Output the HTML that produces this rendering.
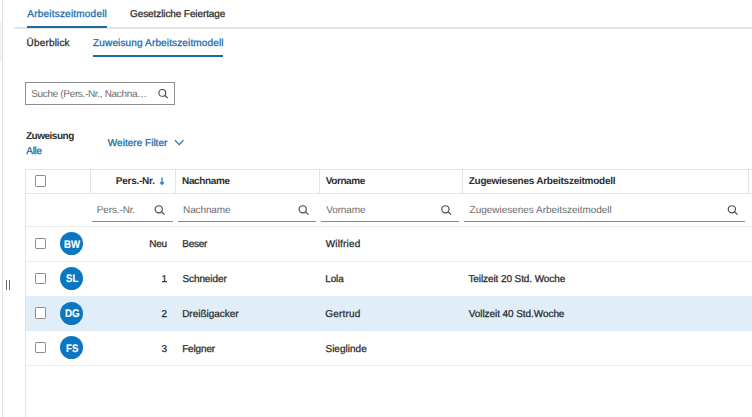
<!DOCTYPE html>
<html lang="de">
<head>
<meta charset="utf-8">
<title>Zuweisung Arbeitszeitmodell</title>
<style>
html,body{margin:0;padding:0;background:#fff;}
body{width:752px;height:417px;overflow:hidden;position:relative;font-family:"Liberation Sans",sans-serif;}
.t{position:absolute;white-space:nowrap;text-rendering:geometricPrecision;font-family:"Liberation Sans",sans-serif;}
.b{position:absolute;}
.cb{position:absolute;width:9.6px;height:9.4px;border:1px solid #8c8c8c;border-radius:1.2px;background:#fff;}
.av{position:absolute;width:23px;height:23px;border-radius:50%;background:#0b77c2;}
.ul{position:absolute;height:1px;background:#8a8a8a;top:220.7px;}
.hl{position:absolute;height:1px;background:#e6e6e6;left:26px;width:726px;}
.vl{position:absolute;width:1px;background:#e2e2e2;top:169px;height:24.5px;}
svg{position:absolute;overflow:visible;}
</style>
</head>
<body>
<!-- left rail -->
<div class="b" style="left:0;top:22px;width:2px;height:39.5px;background:#f0f4f9"></div>
<div class="b" style="left:2px;top:0;width:1px;height:417px;background:#e2e2e2"></div>
<!-- splitter handle -->
<div class="b" style="left:6.2px;top:280px;width:1px;height:10px;background:#666"></div>
<div class="b" style="left:9.3px;top:280px;width:1px;height:10px;background:#666"></div>
<!-- main tab bar line -->
<div class="b" style="left:14px;top:27.2px;width:738px;height:1.5px;background:#e4e4e4"></div>
<div class="b" style="left:27px;top:25.8px;width:79.5px;height:2px;background:#1c6ba3"></div>
<div class="b" style="left:93px;top:55px;width:130.2px;height:1.9px;background:#1c6ba3"></div>
<!-- search box -->
<div class="b" style="left:25px;top:82px;width:148px;height:21px;border:1px solid #8e8e8e;background:#fff"></div>
<!-- weitere filter chevron -->
<svg style="left:174px;top:139px" width="11" height="8" viewBox="0 0 11 8"><path d="M0.9 1.2 L5.2 5.6 L9.5 1.2" fill="none" stroke="#1b6cab" stroke-width="1.2"/></svg>
<!-- table frame -->
<div class="b" style="left:25.3px;top:169px;width:1px;height:248px;background:#e2e2e2"></div>
<div class="hl" style="top:169px"></div>
<div class="hl" style="top:193px"></div>
<div class="hl" style="top:225.7px;background:#eaeaea"></div>
<div class="hl" style="top:260.5px;background:#ececec"></div>
<div class="b" style="left:26px;top:295.5px;width:726px;height:35.2px;background:#e1eef8"></div>
<div class="hl" style="top:365px;background:#ececec"></div>
<div class="vl" style="left:90px"></div>
<div class="vl" style="left:175.2px"></div>
<div class="vl" style="left:319px"></div>
<div class="vl" style="left:462.2px"></div>
<div class="vl" style="left:748.3px"></div>
<!-- sort arrow -->
<svg style="left:158px;top:177px" width="8" height="9" viewBox="0 0 8 9"><path d="M4 0.5 V7.2 M2.2 5.3 L4 7.3 L5.8 5.3" fill="none" stroke="#1a7fda" stroke-width="1.3"/></svg>
<!-- filter underlines -->
<div class="ul" style="left:92px;width:81px"></div>
<div class="ul" style="left:178.3px;width:137.7px"></div>
<div class="ul" style="left:320.7px;width:138.3px"></div>
<div class="ul" style="left:463.8px;width:281.7px"></div>
<!-- filter magnifiers -->
<svg style="left:156px;top:86px" width="14" height="14" viewBox="0 0 14 14"><circle cx="6.30" cy="6.90" r="3.4" fill="none" stroke="#4a4a4a" stroke-width="1.1"/><path d="M8.75 9.26 L11.80 12.20" stroke="#4a4a4a" stroke-width="1.1" fill="none"/></svg>
<svg style="left:152px;top:203px" width="14" height="14" viewBox="0 0 14 14"><circle cx="6.75" cy="6.30" r="3.6" fill="none" stroke="#4a4a4a" stroke-width="1.15"/><path d="M9.37 8.76 L12.50 11.70" stroke="#4a4a4a" stroke-width="1.15" fill="none"/></svg>
<svg style="left:296px;top:203px" width="14" height="14" viewBox="0 0 14 14"><circle cx="6.70" cy="6.30" r="3.6" fill="none" stroke="#4a4a4a" stroke-width="1.15"/><path d="M9.32 8.76 L12.45 11.70" stroke="#4a4a4a" stroke-width="1.15" fill="none"/></svg>
<svg style="left:439px;top:203px" width="14" height="14" viewBox="0 0 14 14"><circle cx="6.40" cy="6.30" r="3.6" fill="none" stroke="#4a4a4a" stroke-width="1.15"/><path d="M9.02 8.76 L12.15 11.70" stroke="#4a4a4a" stroke-width="1.15" fill="none"/></svg>
<svg style="left:725px;top:203px" width="14" height="14" viewBox="0 0 14 14"><circle cx="6.85" cy="6.30" r="3.6" fill="none" stroke="#4a4a4a" stroke-width="1.15"/><path d="M9.47 8.76 L12.60 11.70" stroke="#4a4a4a" stroke-width="1.15" fill="none"/></svg>
<!-- checkboxes -->
<div class="cb" style="left:34.7px;top:175.2px"></div>
<div class="cb" style="left:34.7px;top:237.9px"></div>
<div class="cb" style="left:34.7px;top:272.6px"></div>
<div class="cb" style="left:34.7px;top:307.4px"></div>
<div class="cb" style="left:34.7px;top:342.1px"></div>
<!-- avatars -->
<div class="av" style="left:60px;top:232px"></div>
<div class="av" style="left:60px;top:266.9px"></div>
<div class="av" style="left:60px;top:301.8px"></div>
<div class="av" style="left:60px;top:336.3px"></div>
<span class="t" style="left:27.32px;top:9.00px;font-size:10.0px;line-height:12px;font-weight:400;color:#1b6cab;letter-spacing:0.209px;-webkit-text-stroke:0.28px #1b6cab;">Arbeitszeitmodell</span>
<span class="t" style="left:130.07px;top:9.00px;font-size:10.0px;line-height:12px;font-weight:400;color:#2e2e2e;letter-spacing:-0.101px;-webkit-text-stroke:0.28px #2e2e2e;">Gesetzliche Feiertage</span>
<span class="t" style="left:26.57px;top:38.00px;font-size:10.0px;line-height:12px;font-weight:400;color:#2e2e2e;letter-spacing:0.169px;-webkit-text-stroke:0.28px #2e2e2e;">Überblick</span>
<span class="t" style="left:93.08px;top:38.00px;font-size:10.0px;line-height:12px;font-weight:400;color:#1b6cab;letter-spacing:0.143px;-webkit-text-stroke:0.28px #1b6cab;">Zuweisung Arbeitszeitmodell</span>
<span class="t" style="left:31.20px;top:89.00px;font-size:10.0px;line-height:12px;font-weight:400;color:#6c6c6c;letter-spacing:-0.334px;">Suche (Pers.-Nr., Nachna…</span>
<span class="t" style="left:25.95px;top:131.00px;font-size:10.0px;line-height:12px;font-weight:700;color:#2e2e2e;letter-spacing:-0.488px;">Zuweisung</span>
<span class="t" style="left:26.32px;top:146.00px;font-size:10.0px;line-height:12px;font-weight:400;color:#1b6cab;letter-spacing:-0.300px;-webkit-text-stroke:0.28px #1b6cab;">Alle</span>
<span class="t" style="left:107.83px;top:138.00px;font-size:10.0px;line-height:12px;font-weight:400;color:#1b6cab;letter-spacing:0.017px;-webkit-text-stroke:0.28px #1b6cab;">Weitere Filter</span>
<span class="t" style="left:115.83px;top:176.00px;font-size:10.0px;line-height:12px;font-weight:700;color:#2e2e2e;letter-spacing:-0.250px;">Pers.-Nr.</span>
<span class="t" style="left:182.07px;top:176.00px;font-size:10.0px;line-height:12px;font-weight:700;color:#2e2e2e;letter-spacing:-0.361px;">Nachname</span>
<span class="t" style="left:325.68px;top:176.00px;font-size:10.0px;line-height:12px;font-weight:700;color:#2e2e2e;letter-spacing:-0.396px;">Vorname</span>
<span class="t" style="left:468.70px;top:176.00px;font-size:10.0px;line-height:12px;font-weight:700;color:#2e2e2e;letter-spacing:-0.251px;">Zugewiesenes Arbeitszeitmodell</span>
<span class="t" style="left:96.83px;top:205.00px;font-size:10.0px;line-height:12px;font-weight:400;color:#6c6c6c;letter-spacing:-0.141px;">Pers.-Nr.</span>
<span class="t" style="left:183.07px;top:205.00px;font-size:10.0px;line-height:12px;font-weight:400;color:#6c6c6c;letter-spacing:-0.129px;">Nachname</span>
<span class="t" style="left:326.32px;top:205.00px;font-size:10.0px;line-height:12px;font-weight:400;color:#6c6c6c;letter-spacing:-0.150px;">Vorname</span>
<span class="t" style="left:469.57px;top:205.00px;font-size:10.0px;line-height:12px;font-weight:400;color:#6c6c6c;letter-spacing:-0.022px;">Zugewiesenes Arbeitszeitmodell</span>
<span class="t" style="left:149.32px;top:239.00px;font-size:10.0px;line-height:12px;font-weight:400;color:#2e2e2e;letter-spacing:-0.250px;-webkit-text-stroke:0.28px #2e2e2e;">Neu</span>
<span class="t" style="left:161.45px;top:274.00px;font-size:10.0px;line-height:12px;font-weight:400;color:#2e2e2e;letter-spacing:0.000px;-webkit-text-stroke:0.28px #2e2e2e;">1</span>
<span class="t" style="left:161.55px;top:309.00px;font-size:10.0px;line-height:12px;font-weight:400;color:#2e2e2e;letter-spacing:0.000px;-webkit-text-stroke:0.28px #2e2e2e;">2</span>
<span class="t" style="left:161.55px;top:344.00px;font-size:10.0px;line-height:12px;font-weight:400;color:#2e2e2e;letter-spacing:0.000px;-webkit-text-stroke:0.28px #2e2e2e;">3</span>
<span class="t" style="left:182.32px;top:239.00px;font-size:10.0px;line-height:12px;font-weight:400;color:#2e2e2e;letter-spacing:-0.287px;-webkit-text-stroke:0.28px #2e2e2e;">Beser</span>
<span class="t" style="left:182.45px;top:274.00px;font-size:10.0px;line-height:12px;font-weight:400;color:#2e2e2e;letter-spacing:-0.094px;-webkit-text-stroke:0.28px #2e2e2e;">Schneider</span>
<span class="t" style="left:182.17px;top:309.00px;font-size:10.0px;line-height:12px;font-weight:400;color:#2e2e2e;letter-spacing:-0.018px;-webkit-text-stroke:0.28px #2e2e2e;">Dreißigacker</span>
<span class="t" style="left:182.17px;top:344.00px;font-size:10.0px;line-height:12px;font-weight:400;color:#2e2e2e;letter-spacing:-0.158px;-webkit-text-stroke:0.28px #2e2e2e;">Felgner</span>
<span class="t" style="left:325.72px;top:239.00px;font-size:10.0px;line-height:12px;font-weight:400;color:#2e2e2e;letter-spacing:0.171px;-webkit-text-stroke:0.28px #2e2e2e;">Wilfried</span>
<span class="t" style="left:325.18px;top:274.00px;font-size:10.0px;line-height:12px;font-weight:400;color:#2e2e2e;letter-spacing:-0.092px;-webkit-text-stroke:0.28px #2e2e2e;">Lola</span>
<span class="t" style="left:325.32px;top:309.00px;font-size:10.0px;line-height:12px;font-weight:400;color:#2e2e2e;letter-spacing:0.167px;-webkit-text-stroke:0.28px #2e2e2e;">Gertrud</span>
<span class="t" style="left:325.45px;top:344.00px;font-size:10.0px;line-height:12px;font-weight:400;color:#2e2e2e;letter-spacing:0.022px;-webkit-text-stroke:0.28px #2e2e2e;">Sieglinde</span>
<span class="t" style="left:468.47px;top:274.00px;font-size:10.0px;line-height:12px;font-weight:400;color:#2e2e2e;letter-spacing:-0.094px;-webkit-text-stroke:0.28px #2e2e2e;">Teilzeit 20 Std. Woche</span>
<span class="t" style="left:468.72px;top:309.00px;font-size:10.0px;line-height:12px;font-weight:400;color:#2e2e2e;letter-spacing:-0.069px;-webkit-text-stroke:0.28px #2e2e2e;">Vollzeit 40 Std.Woche</span>
<span class="t" style="left:64.06px;top:239.00px;font-size:11px;line-height:12px;font-weight:700;color:#ffffff;letter-spacing:0.000px;-webkit-text-stroke:0.15px #ffffff;transform:scaleX(0.8704);transform-origin:0 0;">BW</span>
<span class="t" style="left:66.18px;top:273.00px;font-size:11px;line-height:12px;font-weight:700;color:#ffffff;letter-spacing:0.000px;-webkit-text-stroke:0.15px #ffffff;transform:scaleX(0.8741);transform-origin:0 0;">SL</span>
<span class="t" style="left:64.94px;top:308.00px;font-size:11px;line-height:12px;font-weight:700;color:#ffffff;letter-spacing:0.000px;-webkit-text-stroke:0.15px #ffffff;transform:scaleX(0.8918);transform-origin:0 0;">DG</span>
<span class="t" style="left:66.05px;top:343.00px;font-size:11px;line-height:12px;font-weight:700;color:#ffffff;letter-spacing:0.000px;-webkit-text-stroke:0.15px #ffffff;transform:scaleX(0.8762);transform-origin:0 0;">FS</span>
</body>
</html>
